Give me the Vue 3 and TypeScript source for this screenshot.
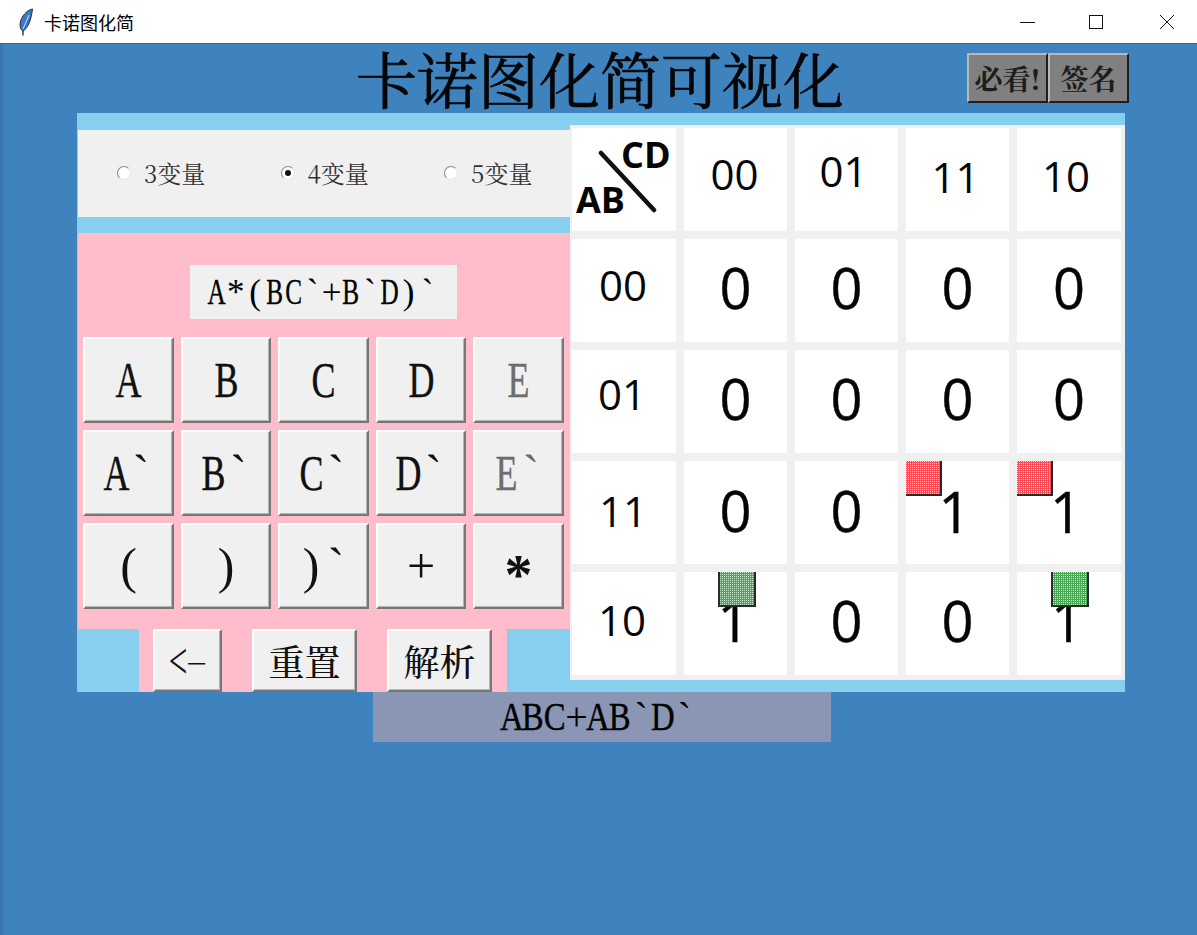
<template>
  <div class="window">
    <header class="titlebar">
      <svg class="feather" viewBox="0 0 16 28" width="16" height="28">
        <path d="M5 21 L5 27.5" stroke="#333" stroke-width="1.4" fill="none" />
        <path d="M14.5 1 C9 2 3 8 2 16 C2 20 3 22 5 23 C9 21 13 14 14.5 1 Z" fill="#3c78c4" stroke="#223048" stroke-width="1" />
        <path d="M5 21 L11 7" stroke="#cfe0f2" stroke-width="1" fill="none" />
      </svg>
      <span class="app-name">卡诺图化简</span>
      <div class="win-controls">
        <svg class="min" width="16" height="16" viewBox="0 0 16 16"><path d="M0 8.5 H15" stroke="#111" fill="none" /></svg>
        <svg width="16" height="16" viewBox="0 0 16 16"><rect x="1.5" y="1.5" width="13" height="13" stroke="#111" fill="none" /></svg>
        <svg width="16" height="16" viewBox="0 0 16 16"><path d="M1 1 L15 15 M15 1 L1 15" stroke="#111" fill="none" /></svg>
      </div>
    </header>

    <main class="page">
      <div class="heading">
        <h1 class="title">卡诺图化简可视化</h1>
        <div class="top-buttons">
          <button class="dark-btn">必看!</button>
          <button class="dark-btn">签名</button>
        </div>
      </div>

      <section class="panel">
        <div class="left-col">
          <div class="radios">
            <label v-for="n in [3, 4, 5]" :key="n" class="radio">
              <span class="dot" :class="{ on: n === vars }"></span>
              <span class="radio-text">{{ n }}变量</span>
            </label>
          </div>

          <div class="keypad">
            <div class="entry">
              <span v-for="(ch, i) in entry" :key="i" class="ch" :class="{ letter: isLetter(ch) }">{{ ch }}</span>
            </div>
            <div class="keys">
              <button v-for="key in keys" :key="key" class="key" :class="{ off: key.startsWith('E') }">
                <span
                  v-for="(ch, i) in key"
                  :key="i"
                  class="ch"
                  :class="{ letter: isLetter(ch), star: ch === '*' }"
                >{{ ch }}</span>
              </button>
            </div>
          </div>

          <div class="actions">
            <button class="action back"><span class="ch lt">&lt;</span><span class="ch dash">-</span></button>
            <button class="action">重置</button>
            <button class="action">解析</button>
          </div>
        </div>

        <div class="kmap">
          <div class="cell corner">
            <span class="cd">CD</span>
            <span class="ab">AB</span>
            <svg class="slash" width="60" height="64" viewBox="0 0 60 64">
              <path d="M3 3 L56 60" stroke="#111" stroke-width="4.5" stroke-linecap="round" fill="none" />
            </svg>
          </div>
          <div
            v-for="(cell, i) in cells"
            :key="i"
            class="cell"
            :class="{ head: cell.head }"
          >
            <span class="val" :style="{ transform: `translate(${cell.dx}px, ${cell.dy}px)` }">{{ cell.text }}</span>
            <svg v-if="cell.mark" class="mark" :class="cell.mark" :width="cell.mark === 'red' ? 36 : 38" height="35" shape-rendering="crispEdges">
              <rect width="38" height="35" :fill="cell.mark === 'red' ? '#ff4a56' : '#4aa855'" />
              <path :d="dots" :fill="cell.mark === 'red' ? '#ffd0d2' : '#c0e8c6'" />
            </svg>
          </div>
        </div>
      </section>

      <div class="result">
        <span v-for="(ch, i) in result" :key="i" class="ch" :class="{ letter: isLetter(ch) }">{{ ch }}</span>
      </div>
    </main>
  </div>
</template>

<script setup lang="ts">
interface Cell {
  text: string
  head?: boolean
  dx: number
  dy: number
  mark?: string
}

const vars = 4
const entry = 'A*(BC`+B`D)`'
const result = 'ABC+AB`D`'

const keys = ['A', 'B', 'C', 'D', 'E', 'A`', 'B`', 'C`', 'D`', 'E`', '(', ')', ')`', '+', '*']

const isLetter = (ch: string): boolean => /[A-Z]/.test(ch)

// 1px stipple used by the highlighted groups
let dots = ''
for (let y = 0; y < 35; y += 2) {
  for (let x = 0; x < 38; x += 2) {
    dots += `M${x} ${y}h1v1h-1z`
  }
}

const h = (text: string, dx: number, dy: number): Cell => ({ text, head: true, dx, dy })
const v = (text: string, dx: number, dy: number, mark?: string): Cell => ({ text, dx, dy, mark })

const cells: Cell[] = [
  h('00', -1, -6), h('01', -3, -9), h('11', -2, -3), h('10', -3, -4),
  h('00', -1, -6), v('0', 0, -4), v('0', 0, -4), v('0', 0, -4), v('0', 0, -4),
  h('01', -2, -8), v('0', 0, -4), v('0', 0, -4), v('0', 0, -4), v('0', 0, -4),
  h('11', -1, -2), v('0', 0, -3), v('0', 0, -3), v('1', -3, -2, 'red'), v('1', -3, -2, 'red'),
  h('10', -2, -4), v('1', -2, -4, 'green'), v('0', 0, -4), v('0', 0, -4), v('1', -2, -4, 'green'),
]
</script>

<style>
body {
  margin: 0;
  background: #3e82be;
}
</style>

<style scoped>
.window {
  width: 1197px;
  height: 935px;
  overflow: hidden;
  font-family: "Liberation Serif", "Noto Sans CJK SC", serif;
  color: #000;
}

.titlebar {
  height: 43px;
  display: flex;
  align-items: center;
  background: #fff;
  border-bottom: 1px solid #3a6a96;
  font-family: "Noto Sans CJK SC", sans-serif;
}

.feather {
  margin-left: 18px;
}

.app-name {
  margin-left: 10px;
  font-size: 18px;
  line-height: 42px;
}

.win-controls {
  margin-left: auto;
  margin-right: 22px;
  display: flex;
  gap: 55px;
}

.min {
  margin-right: -3px;
}

.page {
  height: 891px;
  background: #3e82be;
  border-left: 3px solid #3a76ae;
}

.heading {
  height: 69px;
  display: flex;
  align-items: flex-start;
}

.title {
  margin: 0 0 0 353px;
  width: 485px;
  font-size: 61px;
  line-height: 68px;
  font-weight: 400;
  font-family: "Noto Serif CJK SC", "Noto Sans CJK SC", sans-serif;
  -webkit-text-stroke: 0.6px #050505;
  white-space: nowrap;
  color: #050505;
}

.top-buttons {
  display: flex;
  margin-left: 126px;
  margin-top: 9px;
}

.dark-btn {
  width: 81px;
  height: 50px;
  padding: 0;
  box-sizing: border-box;
  background: #808080;
  border: 2px solid;
  border-color: #b8b8b8 #1e1e1e #1e1e1e #b8b8b8;
  font-family: "Noto Serif CJK SC", "Noto Sans CJK SC", sans-serif;
  font-size: 28px;
  font-weight: 700;
  color: #1c1c1c;
  white-space: nowrap;
}

.panel {
  margin-left: 74px;
  width: 1048px;
  height: 579px;
  display: flex;
  align-items: flex-start;
  background: #87cfee;
}

.left-col {
  width: 492px;
  flex: none;
  margin-left: 1px;
  padding-top: 17px;
}

.radios {
  height: 87px;
  background: #f0f0f0;
  display: flex;
  align-items: center;
  padding-left: 39px;
  box-sizing: border-box;
  overflow: hidden;
}

.radio {
  flex: none;
  width: 163.5px;
  display: flex;
  align-items: center;
  gap: 13px;
  color: #333;
}

.radio-text {
  font-family: "Noto Serif CJK SC", "Noto Sans CJK SC", sans-serif;
  font-size: 24px;
  font-weight: 400;
  line-height: 24px;
  white-space: nowrap;
  margin-top: -1px;
}

.dot {
  width: 14px;
  height: 14px;
  flex: none;
  margin-top: -1px;
  border-radius: 50%;
  background: #fff;
  border: 1px solid;
  border-color: #8a8a8a #e4e4e4 #e4e4e4 #8a8a8a;
  box-sizing: border-box;
  display: flex;
  align-items: center;
  justify-content: center;
}

.dot.on::after {
  content: "";
  width: 6px;
  height: 6px;
  border-radius: 50%;
  background: #111;
}

.keypad {
  margin-top: 16px;
  height: 396px;
  background: #ffbccb;
  padding: 32px 5px 0;
  box-sizing: border-box;
}

.entry {
  margin-left: 107px;
  width: 267px;
  height: 54px;
  background: #f0f0f0;
  display: flex;
  align-items: center;
  padding-left: 17px;
  box-sizing: border-box;
  font-size: 35px;
}

.entry .ch {
  width: 19.2px;
}

.keys {
  margin-top: 18px;
  display: grid;
  grid-template-columns: 91px 90px 91px 90px 91px;
  grid-auto-rows: 86px;
  column-gap: 7px;
  row-gap: 7px;
}

.key,
.action {
  padding: 0;
  background: #f0f0f0;
  border: 2px solid;
  border-color: #fff #777 #777 #fff;
  box-shadow: inset -1px -1px 0 #b5b5b5;
  color: #111;
  font-family: inherit;
  display: flex;
  align-items: center;
  justify-content: center;
}

.key {
  font-size: 50px;
}

.key.off {
  color: #6d6d6d;
}

.ch {
  display: inline-flex;
  justify-content: center;
  width: 25px;
  line-height: 1;
}

.ch.letter {
  -webkit-text-stroke: 0.4px currentColor;
  transform: scaleX(0.72);
}

.ch.star {
  font-size: 56px;
  font-weight: 700;
  transform: translateY(9px);
}

.actions {
  margin-left: 61px;
  width: 368px;
  height: 63px;
  background: #ffbccb;
  display: flex;
  padding-left: 14px;
  gap: 30px;
  box-sizing: border-box;
}

.action {
  width: 105px;
  height: 63px;
  font-family: "Noto Serif CJK SC", "Noto Sans CJK SC", sans-serif;
  font-size: 36px;
  font-weight: 500;
}

.action.back {
  width: 69px;
  font-family: "Liberation Serif", serif;
}

.action.back .lt {
  width: 18px;
  font-size: 46px;
  transform: scale(0.72, 1.1);
}

.action.back .dash {
  width: 19px;
  font-family: "Noto Sans CJK SC", sans-serif;
  font-size: 30px;
  font-weight: 300;
  transform: translateY(-2px) scaleX(2.3);
}

.kmap {
  margin-top: 12px;
  width: 555px;
  height: 555px;
  flex: none;
  box-sizing: border-box;
  padding: 3px 4px 5px 2px;
  background: #f0f0f0;
  display: grid;
  grid-template-columns: 104px repeat(3, 103px) 104px;
  grid-template-rows: repeat(5, 103px);
  gap: 8px;
}

.cell {
  position: relative;
  background: #fff;
  display: flex;
  align-items: center;
  justify-content: center;
  font-family: "Open Sans", sans-serif;
  font-size: 56px;
  color: #050505;
  -webkit-text-stroke: 0.4px #050505;
}

.cell.head {
  font-size: 42px;
  -webkit-text-stroke: 0;
}

.val {
  display: inline-block;
  line-height: 1;
}

.mark {
  position: absolute;
  top: 0;
  left: 0;
  box-sizing: border-box;
  border-right: 2px solid #2a2a2a;
  border-bottom: 2px solid #2a2a2a;
}

.mark.green {
  left: 34px;
  border-left: 2px solid #2a2a2a;
}

.corner {
  font-size: 36px;
  font-weight: 700;
  -webkit-text-stroke: 0;
}

.cd,
.ab,
.slash {
  position: absolute;
}

.cd {
  left: 49px;
  top: 9px;
  line-height: 1;
}

.ab {
  left: 4px;
  top: 54px;
  line-height: 1;
}

.slash {
  left: 26px;
  top: 22px;
}

.result {
  margin-left: 370px;
  width: 458px;
  height: 50px;
  background: #8a96b4;
  display: flex;
  align-items: center;
  justify-content: center;
  padding-right: 8px;
  box-sizing: border-box;
  font-size: 40px;
}

.result .ch {
  width: 21.6px;
}

.result .ch.letter {
  transform: scaleX(0.82);
}
</style>
